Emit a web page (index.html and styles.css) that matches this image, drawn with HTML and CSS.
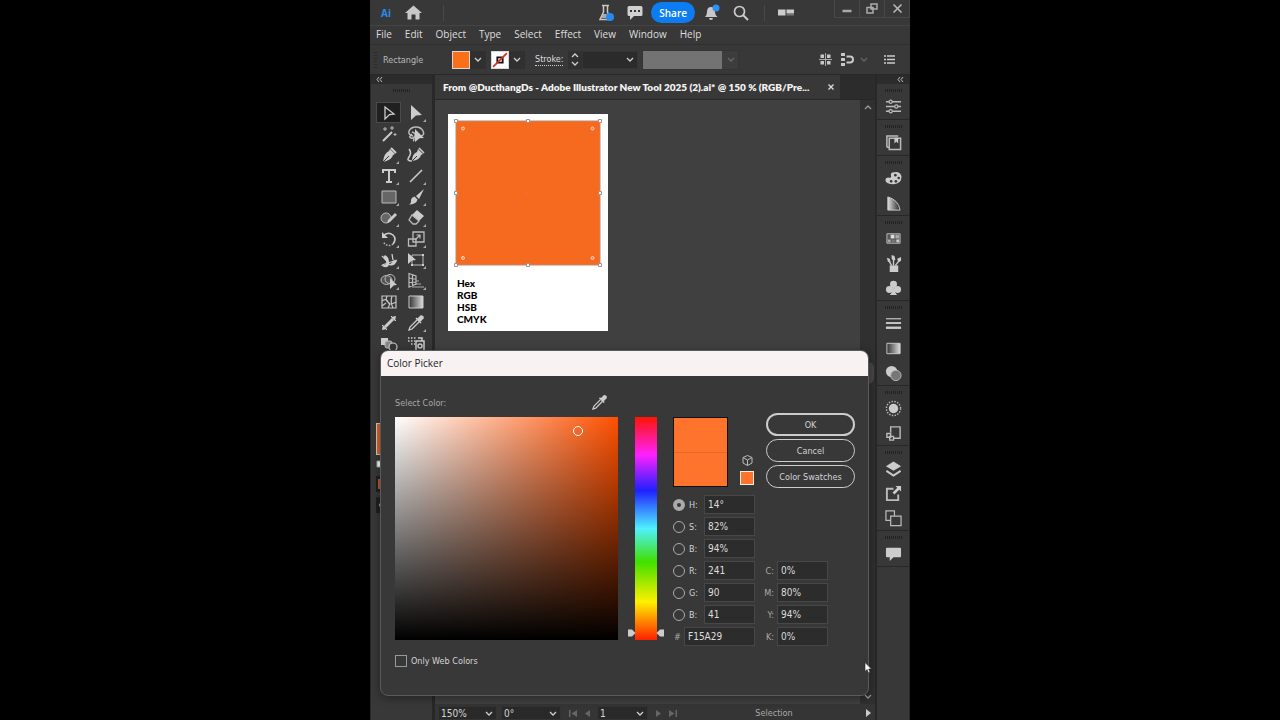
FILE: index.html
```html
<!DOCTYPE html>
<html lang="en">
<head>
<meta charset="utf-8">
<title>Color Picker</title>
<link rel="stylesheet" href="styles.css">
</head>
<body>
<main class="app">
  <header class="titlebar">
    <span class="logo">Ai</span>
    <button class="icon-btn home" aria-label="Home"><svg width="17" height="15" viewBox="0 0 17 15"><path fill="#c8c8c8" d="M8.500.5 0 8h2.500v6.500h4V9.500h4v5h4V8H17z"/></svg></button>
    <span class="divider"></span>
    <div class="title-tools">
      <button class="icon-btn" aria-label="Beta features"><svg width="17" height="18" viewBox="0 0 17 18"><path d="M4 1.500h7M5.500 2v6L2 15.500h10L9.500 8V2" fill="none" stroke="#c8c8c8" stroke-width="1.500"/><path d="M5 10h4l2 4H3z" fill="#aaa"/><circle cx="12" cy="13" r="4" fill="#2389f5"/></svg></button>
      <button class="icon-btn" aria-label="Comments"><svg width="16" height="16" viewBox="0 0 16 16"><path fill="#d0d0d0" d="M2 1h12q1.500 0 1.500 1.500v7Q15.500 11 14 11H7l-4 4v-4H2Q.5 11 .5 9.500v-7Q.5 1 2 1"/><path d="M3 5h2v2H3zm4 0h2v2H7zm4 0h2v2h-2z" fill="#333"/></svg></button>
      <button class="share">Share</button>
      <button class="icon-btn bell" aria-label="Notifications"><svg width="16" height="17" viewBox="0 0 16 17"><path fill="#c8c8c8" d="M6 3q4 0 4 5 0 3 2.500 5H0q2-2 2-5 0-5 4-5m-2 11h4q0 2-2 2t-2-2"/><circle cx="11" cy="4" r="3.500" fill="#2d91f5"/></svg></button>
      <button class="icon-btn" aria-label="Search"><svg width="16" height="16" viewBox="0 0 16 16"><circle cx="6.500" cy="6.500" r="5" fill="none" stroke="#ccc" stroke-width="1.700"/><path d="m10 10 5 5" stroke="#ccc" stroke-width="2"/></svg></button>
    </div>
    <span class="divider"></span>
    <button class="icon-btn tiles" aria-label="Arrange documents"><svg width="16" height="7" viewBox="0 0 16 7"><path fill="#ccc" d="M0 .5h7.500v6H0zm8.500 0H16v4H8.500z"/><path fill="#777" d="M8.500 5H16v1.500H8.500z"/></svg></button>
    <div class="window-buttons">
      <button aria-label="Minimize"><svg width="10" height="11" viewBox="0 0 10 11"><path d="M.5 8h9" stroke="#aaa" stroke-width="2.500"/></svg></button>
      <button aria-label="Restore"><svg width="12" height="11" viewBox="0 0 12 11"><path fill="none" stroke="#aaa" stroke-width="1.500" d="M5 1h6v5H5zM1 4.500h6V10H1z"/></svg></button>
      <button aria-label="Close"><svg width="9" height="9" viewBox="0 0 9 9"><path d="m.5.5 8 8m0-8-8 8" stroke="#bbb" stroke-width="1.500"/></svg></button>
    </div>
  </header>

  <nav class="menubar">
    <button>File</button><button>Edit</button><button>Object</button><button>Type</button><button>Select</button><button>Effect</button><button>View</button><button>Window</button><button>Help</button>
  </nav>

  <section class="controlbar">
    <span class="vgrip"></span>
    <span class="kind">Rectangle</span>
    <div class="paint">
      <button class="swatch fill" aria-label="Fill"></button>
      <button class="drop" aria-label="Fill options"><svg class="chev" viewBox="0 0 8 5"><path d="m1 1 3 3 3-3"/></svg></button>
    </div>
    <div class="paint">
      <button class="swatch" aria-label="Stroke color"><svg width="16" height="16" viewBox="0 0 15 15"><path d="M5 5h5v5H5z" fill="none" stroke="#111" stroke-width="1.700"/><path d="M1 14 14 1" stroke="#d8301c" stroke-width="1.700"/></svg></button>
      <button class="drop" aria-label="Stroke options"><svg class="chev" viewBox="0 0 8 5"><path d="m1 1 3 3 3-3"/></svg></button>
    </div>
    <label class="stroke-label" for="stroke">Stroke:</label>
    <button class="spinner" aria-label="Step weight"><svg class="chev" viewBox="0 0 8 5"><path d="m1 4 3-3 3 3"/></svg><svg class="chev" viewBox="0 0 8 5"><path d="m1 1 3 3 3-3"/></svg></button>
    <span class="combo weight"><select id="stroke"><option></option></select><svg class="chev" viewBox="0 0 8 5"><path d="m1 1 3 3 3-3"/></svg></span>
    <span class="combo profile"><select aria-label="Width profile" disabled><option></option></select><svg class="chev" viewBox="0 0 8 5"><path d="m1 1 3 3 3-3"/></svg></span>
    <div class="control-end">
      <button class="icon-btn" aria-label="Align"><svg width="13" height="13" viewBox="0 0 13 13"><path fill="#c8c8c8" d="M1.500 1.500H5V5H1.500zm6.500 0h3.500V5H8zM1.500 8H5v3.500H1.500zM8 8h3.500v3.500H8z"/><path d="M6.500 0v13M0 6.500h13" stroke="#aaa"/></svg></button>
      <button class="icon-btn" aria-label="Snap"><svg width="13" height="13" viewBox="0 0 13 13"><path fill="#c8c8c8" d="M0 0h4v3H0zm0 5h4v3H0zm0 5h4v3H0z"/><path d="M5.500 3.500H9q3 0 3 3t-3 3H5.500" fill="none" stroke="#c8c8c8" stroke-width="2"/></svg></button>
      <svg class="chev dim" viewBox="0 0 8 5"><path d="m1 1 3 3 3-3"/></svg>
      <button class="icon-btn list" aria-label="Panel menu"><svg width="11" height="9" viewBox="0 0 11 9"><path d="M0 1h2M3 1h8M0 4.500h2m1 0h8M0 8h2m1 0h8" stroke="#ccc" stroke-width="1.400"/></svg></button>
    </div>
  </section>

  <div class="workspace">
    <aside class="tools">
      <div class="collapse"><svg width="7" height="5" viewBox="0 0 7 5"><path d="M3 0 1 2.500 3 5m3-5L4 2.500 6 5"/></svg></div>
      <div class="grip"></div>
      <div class="tool-grid">
        <button class="active" aria-label="Selection"><svg viewBox="0 0 18 18"><path d="m5 3 9 7-4.500.5L5 15z" fill="none" stroke="#ccc" stroke-width="1.300"/></svg></button>
        <button class="more" aria-label="Direct selection"><svg viewBox="0 0 18 18"><path d="m4 1 11 10-6 .5L4 16z" fill="#ccc"/></svg></button>
        <button aria-label="Magic wand"><svg viewBox="0 0 18 18"><path d="m3 16 9-9" stroke="#ccc" stroke-width="2"/><path d="M5 2v4M3 4h4m5-3v4m-2-2h4m1 5v3m-1.500-1.500h3" stroke="#bbb"/></svg></button>
        <button aria-label="Lasso"><svg viewBox="0 0 18 18"><path d="M6 11Q1 10 2 6q2-4 7-4t7 4-2 5M5 7q4 1 3 4t-4 2 1-4M6 12q2 3 0 4" fill="none" stroke="#bbb" stroke-width="1.500"/><path d="m8 4 9 9-4.500.3L8 17z" fill="#ccc"/></svg></button>
        <button class="more" aria-label="Pen"><svg viewBox="0 0 18 18"><path d="M10 3 15 8l-2 1q-1 5-10 7Q4 7 9 5z" fill="#ccc"/><path d="m3 16 6-6" stroke="#383838"/><path d="m11 2 5 5" stroke="#ccc" stroke-width="2"/></svg></button>
        <button aria-label="Curvature"><svg viewBox="0 0 18 18"><path d="m11 3 5 5-2 1q-1 5-9 6 0-7 5-9z" fill="#ccc"/><path d="m5 15 5-5" stroke="#383838"/><path d="M2 3q3 4 0 8t3 4M12 2l5 5" fill="none" stroke="#ccc" stroke-width="1.500"/></svg></button>
        <button class="more" aria-label="Type"><svg viewBox="0 0 18 18"><path d="M3 6V3h12v3M9 3v12M6 15h6" fill="none" stroke="#ccc" stroke-width="2"/></svg></button>
        <button class="more" aria-label="Line"><svg viewBox="0 0 18 18"><path d="M3 15 15 3" stroke="#ccc" stroke-width="1.600"/></svg></button>
        <button class="more" aria-label="Rectangle"><svg viewBox="0 0 18 18"><path d="M2 3h14v12H2z" fill="#666" stroke="#bbb"/></svg></button>
        <button class="more" aria-label="Paintbrush"><svg viewBox="0 0 18 18"><path d="m17 1-5 10-3-3zM7.500 8.500l3 3q-1 5-9 5 3-1 2.500-4 0-3 3.500-4" fill="#ccc"/></svg></button>
        <button class="more" aria-label="Shaper"><svg viewBox="0 0 18 18"><circle cx="6" cy="9" r="5" fill="#666" stroke="#bbb"/><path d="m7 14 1-3 7-7 2 2-7 7z" fill="#ccc"/></svg></button>
        <button class="more" aria-label="Eraser"><svg viewBox="0 0 18 18"><path d="m10 1 7 6-5 5-7-6z" fill="#ccc"/><path d="m5 6 7 6-3 3H6l-4-4z" fill="none" stroke="#bbb" stroke-width="1.300"/></svg></button>
        <button class="more" aria-label="Rotate"><svg viewBox="0 0 18 18"><path d="M3 6q5-5 10-1 4 4 0 9" fill="none" stroke="#ccc" stroke-width="1.600"/><path d="M13 14q-5 4-10-2" fill="none" stroke="#bbb" stroke-width="1.500" stroke-dasharray="1.500 1.500"/><path d="M2 2v6h6z" fill="#ccc"/></svg></button>
        <button class="more" aria-label="Scale"><svg viewBox="0 0 18 18"><path d="M6 2h11v10H6zM1.500 9H9v7H1.500z" fill="none" stroke="#bbb" stroke-width="1.300"/><path d="m8 10 5-5M9.500 5H13v3.500" fill="none" stroke="#bbb" stroke-width="1.200"/></svg></button>
        <button class="more" aria-label="Width"><svg viewBox="0 0 18 18"><path d="M1 14q6 1 5-4-4-4-1-6 4 2 4 7t5-2l3 1q-3 6-8 4-2 4-7 1" fill="#ccc"/><path d="m2 5 5 5m5-7 1 6M2 14 17 9" stroke="#ccc" stroke-width="1.300"/></svg></button>
        <button class="more" aria-label="Free transform"><svg viewBox="0 0 18 18"><path d="M5 4h11v10H5z" fill="none" stroke="#bbb"/><path d="M15 3h2v2h-2zm0 10h2v2h-2zM4 13h2v2H4z" fill="#ccc"/><path d="m1 2 8 7-4 .5L1 13z" fill="#ccc"/></svg></button>
        <button class="more" aria-label="Shape builder"><svg viewBox="0 0 18 18"><ellipse cx="6.500" cy="8" rx="5.500" ry="4.500" fill="#555" stroke="#bbb"/><ellipse cx="10" cy="7" rx="5" ry="4.500" fill="none" stroke="#bbb"/><path d="m10 6 7 7-3 .3L10 17z" fill="#ccc"/></svg></button>
        <button class="more" aria-label="Perspective grid"><svg viewBox="0 0 18 18"><path d="M2 1.500v13.500L9 12V4zM2 6l7 1M2 10.500 9 10M5.500 3v11" fill="none" stroke="#bbb" stroke-width="1.200"/><path d="M9 9h3M9 12h5M5 15h12" stroke="#aaa"/></svg></button>
        <button aria-label="Mesh"><svg viewBox="0 0 18 18"><path d="M2 3h14v12H2zM2 8q5-3 6 1t8 0M7 3q-2 5 1 6t0 6m4-12q-2 6 1 12M2 13l4-3" fill="none" stroke="#c5c5c5" stroke-width="1.200"/></svg></button>
        <button aria-label="Gradient"><svg viewBox="0 0 18 18"><defs><linearGradient id="g"><stop stop-color="#333"/><stop offset="1" stop-color="#ddd"/></linearGradient></defs><path d="M2 3h14v12H2z" fill="url(#g)" stroke="#ccc"/></svg></button>
        <button aria-label="Measure"><svg viewBox="0 0 18 18"><path d="M5 13 13 5" stroke="#ccc" stroke-width="3"/><path d="m11 2 5 5M2 11l5 5" stroke="#ccc"/><path d="m16 2-5 1 4 4zM2 16l1-5 4 4z" fill="#ccc"/></svg></button>
        <button class="more" aria-label="Eyedropper"><svg viewBox="0 0 18 18"><path d="m11 5 3-3q2 0 2 2l-3 3zM9 4l5 5" fill="#ccc" stroke="#ccc" stroke-width="1.700"/><path d="m10 6-7 7-1 3 3-1 7-7" fill="none" stroke="#ccc" stroke-width="1.300"/></svg></button>
        <button aria-label="Blend"><svg viewBox="0 0 18 18"><path d="M1 3h7v7H1z" fill="#ccc"/><rect x="5" y="6" width="7" height="7" rx="2" fill="#888" stroke="#bbb"/><circle cx="13" cy="12" r="4" fill="#383838" stroke="#ccc" stroke-width="1.200"/></svg></button>
        <button aria-label="Symbol sprayer"><svg viewBox="0 0 18 18"><path d="M9 6h8v10H9zM11 3h4v3" fill="none" stroke="#ccc" stroke-width="1.500"/><circle cx="13" cy="11" r="2" fill="none" stroke="#ccc" stroke-width="1.500"/><path d="M1 3h8M1 6h7M4 9h4" stroke="#ccc" stroke-width="1.500" stroke-dasharray="1.500 1.500"/></svg></button>
      </div>
      <div class="tool-colors">
        <button class="current-fill" aria-label="Current fill"></button>
        <button class="defaults" aria-label="Default colors"><svg width="10" height="11" viewBox="0 0 10 11"><path d="M1 1h6v6H1z" fill="#fff" stroke="#aaa"/><path d="M8 4v5H4" fill="none" stroke="#fff" stroke-width="1.500"/></svg></button>
        <button class="mode" aria-label="Color mode"><span class="mode-chip"></span></button>
        <button class="mode" aria-label="Draw mode"><span class="mode-dot"></span></button>
      </div>
    </aside>

    <section class="document">
      <div class="tabs"><div class="tab"><span class="tab-name">From @DucthangDs - Adobe Illustrator New Tool 2025 (2).ai* @ 150 % (RGB/Pre...</span><button class="icon-btn" aria-label="Close tab"><svg width="6" height="6" viewBox="0 0 6 6"><path d="m.5.5 5 5m0-5-5 5" stroke="#ddd" stroke-width="1.300"/></svg></button></div></div>
      <div class="stage">
        <div class="canvas">
          <article class="artboard">
            <svg class="square" viewBox="0 0 146 146">
              <path fill="#f66a1f" stroke="#b88b78" d="M1 1h144v144H1z"/>
              <g fill="#fff" stroke="#a98f85"><path d="M-.5-.5h3v3h-3zm72 0h3v3h-3zm72 0h3v3h-3zm-144 72h3v3h-3zm144 0h3v3h-3zm-144 72h3v3h-3zm72 0h3v3h-3zm72 0h3v3h-3z"/></g>
              <g fill="#f4874c" stroke="#ffd5bd"><circle cx="8" cy="8.500" r="1.500"/><circle cx="137.500" cy="8.500" r="1.500"/><circle cx="8" cy="138" r="1.500"/><circle cx="137.500" cy="138" r="1.500"/></g>
              <path d="m71 72 3 2m0-2-3 2" stroke="#ff654d"/>
            </svg>
            <p class="modes">Hex<br>RGB<br>HSB<br>CMYK</p>
          </article>
        </div>
        <div class="scrollbar"><svg class="chev" viewBox="0 0 8 5"><path d="m1 4 3-3 3 3"/></svg><span class="thumb"></span><svg class="chev" viewBox="0 0 8 5"><path d="m1 1 3 3 3-3"/></svg></div>
      </div>
      <footer class="status">
        <span class="combo zoom"><select aria-label="Zoom"><option>150%</option></select><svg class="chev" viewBox="0 0 8 5"><path d="m1 1 3 3 3-3"/></svg></span>
        <span class="combo angle"><select aria-label="Rotate view"><option>0°</option></select><svg class="chev" viewBox="0 0 8 5"><path d="m1 1 3 3 3-3"/></svg></span>
        <div class="pager">
          <button class="icon-btn" aria-label="First"><svg width="8" height="7" viewBox="0 0 8 7"><path fill="#666" d="M0 0h1.500v7H0zm8 0v7L2.500 3.500z"/></svg></button>
          <button class="icon-btn" aria-label="Previous"><svg width="5" height="7" viewBox="0 0 5 7"><path fill="#666" d="M5 0v7L0 3.500z"/></svg></button>
        </div>
        <span class="combo board"><select aria-label="Artboard"><option>1</option></select><svg class="chev" viewBox="0 0 8 5"><path d="m1 1 3 3 3-3"/></svg></span>
        <div class="pager">
          <button class="icon-btn" aria-label="Next"><svg width="5" height="7" viewBox="0 0 5 7"><path fill="#666" d="M0 0v7l5-3.500z"/></svg></button>
          <button class="icon-btn" aria-label="Last"><svg width="8" height="7" viewBox="0 0 8 7"><path fill="#666" d="M6.500 0H8v7H6.500zM0 0v7l5.500-3.500z"/></svg></button>
        </div>
        <span class="mode-name">Selection</span>
        <button class="icon-btn play" aria-label="Status options"><svg width="5" height="8" viewBox="0 0 5 8"><path fill="#ccc" d="M0 0v8l5-4z"/></svg></button>
      </footer>
    </section>

    <aside class="panels">
      <div class="collapse end"><svg width="7" height="5" viewBox="0 0 7 5"><path d="M3 0 1 2.500 3 5m3-5L4 2.500 6 5"/></svg></div>
      <div class="group"><button aria-label="Properties"><svg viewBox="0 0 18 18"><path d="M1 4h16M1 9h16M1 14h16" stroke="#bbb" stroke-width="1.400"/><g fill="#383838" stroke="#bbb" stroke-width="1.300"><circle cx="6" cy="4" r="1.700"/><circle cx="12" cy="9" r="1.700"/><circle cx="6" cy="14" r="1.700"/></g></svg></button></div>
      <div class="group"><button aria-label="Libraries"><svg viewBox="0 0 18 18"><path d="M2 14V2h12M4.500 4.500h12v12h-12zM2 14h2" fill="none" stroke="#bbb" stroke-width="1.600"/><path d="M10 4h4v6l-2-2-2 2z" fill="#ccc"/></svg></button></div>
      <div class="group"><button aria-label="Color"><svg viewBox="0 0 18 18"><path d="M7 3q9-3 10.500 4 0 8-8.500 8-7.500 0-8.500-4 0-3 3-3 3 1 3-1-1-3 .5-4" fill="#ccc"/><g fill="#383838"><circle cx="11" cy="5.500" r="1.400"/><circle cx="14.500" cy="8.500" r="1.400"/><circle cx="11.500" cy="12" r="1.400"/><circle cx="6.500" cy="12" r="1.400"/></g></svg></button><button aria-label="Color guide"><svg viewBox="0 0 18 18"><path d="M3 16V2q11 3 13 14z" fill="url(#g2)" stroke="#ccc"/><defs><linearGradient id="g2" x1="1" x2="0"><stop stop-color="#222"/><stop offset="1" stop-color="#ddd"/></linearGradient></defs></svg></button></div>
      <div class="group"><button aria-label="Swatches"><svg viewBox="0 0 18 18"><path d="M2 4h14v10H2z" fill="#555" stroke="#bbb"/><path d="M6 5h4v4H6z" fill="#ddd"/><path d="M11 5h4v4h-4zM3 10h3v3H3z" fill="#aaa"/><path d="M7 10h4v3H7z" fill="#777"/><path d="M12 10h3v3h-3z" fill="#ccc"/></svg></button><button aria-label="Brushes"><svg viewBox="0 0 18 18"><path d="M5 11h9v7H5z" fill="#ccc"/><path d="m7 11-3-5m5 5V3m2 8 4-5" stroke="#ccc" stroke-width="1.400"/><path d="m2 3 3 1 1 4-3-1zm5-3 3 1 1 4-2 1-2-2zm6 4 4-2v4l-3 2z" fill="#ccc"/></svg></button><button aria-label="Symbols"><svg viewBox="0 0 18 18"><g fill="#ccc"><circle cx="9" cy="4.500" r="3.700"/><circle cx="4.700" cy="10" r="3.700"/><circle cx="13.300" cy="10" r="3.700"/><path d="M8 7h2q0 7 3 9H5q3-2 3-9"/></g></svg></button></div>
      <div class="group"><button aria-label="Stroke"><svg viewBox="0 0 18 18"><path d="M1 4h16" stroke="#ccc" stroke-width="1.200"/><path d="M1 8.500h16" stroke="#ccc" stroke-width="2"/><path d="M1 13.500h16" stroke="#ccc" stroke-width="2.500"/></svg></button><button aria-label="Gradient panel"><svg viewBox="0 0 18 18"><path d="M2 3.500h14v11H2z" fill="url(#g)" stroke="#ccc"/></svg></button><button aria-label="Transparency"><svg viewBox="0 0 18 18"><circle cx="7" cy="7" r="6" fill="#ccc"/><circle cx="11.500" cy="11" r="5.500" fill="#777" stroke="#bbb"/></svg></button></div>
      <div class="group"><button aria-label="Appearance"><svg viewBox="0 0 18 18"><circle cx="9" cy="9" r="5" fill="#ccc"/><circle cx="9" cy="9" r="7.500" fill="none" stroke="#bbb" stroke-width="1.500" stroke-dasharray="1.500 1.500"/></svg></button><button aria-label="Graphic styles"><svg viewBox="0 0 18 18"><path d="M6 8V2h10v12H9M2 9h4v4H2zm3 3h4v4H5z" fill="none" stroke="#bbb" stroke-width="1.500"/></svg></button></div>
      <div class="group"><button aria-label="Layers"><svg viewBox="0 0 18 18"><path d="m9 1.500 8 5-8 5-8-5z" fill="#ccc"/><path d="m1.500 11.500 7.500 5 7.500-5" fill="none" stroke="#ccc" stroke-width="2"/></svg></button><button aria-label="Asset export"><svg viewBox="0 0 18 18"><path d="M9 4H2v12h12v-6" fill="none" stroke="#bbb" stroke-width="2"/><path d="M11 1h6v6l-2-2-5 5-2-2 5-5z" fill="#ccc"/></svg></button><button aria-label="Artboards"><svg viewBox="0 0 18 18"><path d="M6 11H1V1h9v5M6 6.500h11v10H6z" fill="none" stroke="#bbb" stroke-width="1.300"/></svg></button></div>
      <div class="group"><button aria-label="Panel comments"><svg viewBox="0 0 18 18"><path d="M2 3h14q1 0 1 1v8q0 1-1 1H9l-4 4v-4H2q-1 0-1-1V4q0-1 1-1" fill="#ccc"/></svg></button></div>
    </aside>
  </div>

  <form class="dialog" aria-labelledby="dialog-title">
    <h1 class="dialog-title" id="dialog-title">Color Picker</h1>
    <div class="dialog-body">
      <div class="pick-head"><span>Select Color:</span><button type="button" class="icon-btn" aria-label="Pick from screen"><svg width="17" height="17" viewBox="0 0 18 18"><path d="m11 5 3-3q2 0 2 2l-3 3zM9 4l5 5" fill="#ccc" stroke="#ccc" stroke-width="1.700"/><path d="m10 6-7 7-1 3 3-1 7-7" fill="none" stroke="#ccc" stroke-width="1.300"/></svg></button></div>
      <div class="pick-row">
        <div class="field"><span class="marker"></span></div>
        <div class="hue"><svg class="hue-arrows" viewBox="0 0 36 8"><path fill="#ccc" d="M0 .5h4L7.500 4 4 7.500H0zm36 0h-4L28.500 4 32 7.500h4z"/></svg></div>
        <div class="values">
          <div class="preview">
            <div class="compare"><span class="chip-new"></span><span class="chip-old"></span></div>
            <div class="websafe">
              <button type="button" class="icon-btn" aria-label="Web safe"><svg width="11" height="11" viewBox="0 0 11 11"><path d="m5.500.5 4.500 2v5.500l-4.500 2.500L1 8V2.500zM1 2.500 5.500 5 10 2.500M5.500 5v5.500" fill="none" stroke="#bbb"/></svg></button>
              <button type="button" class="safe-chip" aria-label="Nearest web color"></button>
            </div>
          </div>
          <div class="numbers">
            <div class="rows">
              <div class="row"><input type="radio" name="axis" id="rh" checked><label for="rh">H:</label><input class="num" type="text" value="14°" aria-label="Hue"></div>
              <div class="row"><input type="radio" name="axis" id="rs"><label for="rs">S:</label><input class="num" type="text" value="82%" aria-label="Saturation"></div>
              <div class="row"><input type="radio" name="axis" id="rb"><label for="rb">B:</label><input class="num" type="text" value="94%" aria-label="Brightness"></div>
              <div class="row"><input type="radio" name="axis" id="rr"><label for="rr">R:</label><input class="num" type="text" value="241" aria-label="Red"></div>
              <div class="row"><input type="radio" name="axis" id="rg"><label for="rg">G:</label><input class="num" type="text" value="90" aria-label="Green"></div>
              <div class="row"><input type="radio" name="axis" id="rbl"><label for="rbl">B:</label><input class="num" type="text" value="41" aria-label="Blue"></div>
              <div class="row hex"><label for="hex">#</label><input class="num" type="text" id="hex" value="F15A29"></div>
            </div>
            <div class="rows cmyk">
              <div class="row"><label for="c">C:</label><input class="num" type="text" id="c" value="0%"></div>
              <div class="row"><label for="m">M:</label><input class="num" type="text" id="m" value="80%"></div>
              <div class="row"><label for="y">Y:</label><input class="num" type="text" id="y" value="94%"></div>
              <div class="row"><label for="k">K:</label><input class="num" type="text" id="k" value="0%"></div>
            </div>
          </div>
        </div>
        <div class="actions">
          <button type="button" class="pill primary">OK</button>
          <button type="button" class="pill">Cancel</button>
          <button type="button" class="pill">Color Swatches</button>
        </div>
      </div>
      <label class="web-only"><input type="checkbox">Only Web Colors</label>
    </div>
    <svg class="pointer" viewBox="0 0 8 12"><path d="M1 .5v9l2-2 1.500 3.500 1.500-.8L4.700 7H7.500z" fill="#fff" stroke="#222" stroke-width=".6"/></svg>
  </form>
</main>
</body>
</html>
```
FILE: styles.css
```css
* { box-sizing: border-box; }

body {
  margin: 0;
  background: #000;
  color: #d6d6d6;
  font: 10px/14px "Open Sans", "Noto Sans", sans-serif;
}

button, select, input { font: inherit; color: inherit; margin: 0; }

button { background: none; border: 0; padding: 0; }

svg { display: block; }

.app {
  position: relative;
  display: flex;
  flex-direction: column;
  height: 100vh;
  aspect-ratio: 3 / 4;
  margin: 0 auto;
  overflow: hidden;
  background: #383838;
}

.icon-btn { display: flex; align-items: center; justify-content: center; }

.chev {
  width: 8px;
  height: 5px;
  flex: none;
  fill: none;
  stroke: #d0d0d0;
  stroke-width: 1.3;
}
.chev.dim { stroke: #666; }

/* Title bar */
.titlebar {
  display: flex;
  align-items: center;
  flex: none;
  height: 26px;
  padding-left: 11px;
  border-bottom: 1px solid #444;
}
.logo { width: 24px; color: #2b8cf0; font-weight: 700; }
.home { margin-right: 21px; }
.divider { width: 1px; height: 16px; background: #494949; }
.title-tools { display: flex; align-items: center; gap: 12px; margin-left: auto; margin-right: 15px; }
.share {
  height: 21px;
  padding: 0 8px;
  border-radius: 11px;
  background: #0c7cf2;
  color: #fff;
  font-weight: 600;
}
.title-tools .share { margin: 0 -2px 0 -4px; }
.tiles { margin: 0 40px 0 13px; }
.window-buttons { display: flex; align-self: flex-start; border: solid #484848; border-width: 0 0 1px 1px; }
.window-buttons button {
  display: flex;
  align-items: center;
  justify-content: center;
  width: 25px;
  height: 17px;
  border-right: 1px solid #484848;
}

/* Menus */
.menubar {
  display: flex;
  flex: none;
  gap: 13px;
  height: 19px;
  padding-left: 6px;
  border-bottom: 1px solid #2f2f2f;
  color: #dedede;
}
.menubar button { height: 16px; }

/* Control bar */
.controlbar {
  display: flex;
  align-items: center;
  flex: none;
  height: 30px;
  padding-left: 4px;
  border-bottom: 1px solid #282828;
  color: #b8b8b8;
  font: 9px/14px "DejaVu Sans Condensed", "DejaVu Sans", sans-serif;
}
.vgrip { width: 3px; height: 16px; margin-right: 6px; background: repeating-linear-gradient(#2a2a2a 0 1px, transparent 1px 3px); }
.kind { width: 69px; }
.paint { display: flex; margin-right: 5px; }
.swatch { width: 18px; height: 18px; border: 1px solid #d8d8d8; background: #fff; }
.swatch.fill { background: #f87018; }
.drop { display: flex; align-items: center; justify-content: center; width: 16px; background: #303030; }
.stroke-label { margin: 0 5px; color: #ddd; border-bottom: 1px dotted #ccc; line-height: 12px; }
.spinner {
  display: flex;
  flex-direction: column;
  align-items: center;
  justify-content: center;
  gap: 3px;
  width: 14px;
  height: 18px;
  background: #303030;
}
.combo { position: relative; display: flex; align-items: center; height: 18px; background: #2b2b2b; border: 1px solid #343434; }
.combo select { appearance: none; width: 100%; height: 100%; padding: 0 0 0 2px; border: 0; background: none; opacity: 1; }
.combo .chev { position: absolute; right: 3px; pointer-events: none; }
.combo.weight { width: 56px; margin-right: 4px; }
.combo.profile { width: 97px; height: 20px; background: linear-gradient(to right, #737373 79px, #3d3d3d 79px); }
.combo.profile .chev { stroke: #666; }
.control-end { display: flex; align-items: center; gap: 9px; margin-left: auto; padding-right: 15px; }
.control-end .chev { margin-left: -3px; }
.list { margin-left: 7px; }

/* Workspace */
.workspace { display: flex; flex: 1; min-height: 0; }
.collapse { display: flex; align-items: center; height: 9px; padding-left: 5px; background: #2c2c2c; }
.collapse.end { justify-content: flex-end; padding-right: 5px; }
.collapse svg { fill: none; stroke: #bbb; }

.tools { display: flex; flex-direction: column; width: 65px; flex: none; border: solid #282828; border-width: 0 3px 0 1px; }
.grip { width: 17px; height: 3px; margin: 5px auto 10px; background: repeating-linear-gradient(to right, #222 0 1px, transparent 1px 2px); }
.tool-grid { display: grid; grid-template-columns: 27px 27px; grid-auto-rows: 21px; padding-left: 4px; }
.tool-grid button { position: relative; display: flex; align-items: center; justify-content: center; }
.tool-grid svg { width: 18px; height: 18px; }
.tool-grid .active { background: #202020; border: 1px solid #4a4a4a; margin-right: 1px; margin-left: 1px; }
.more::after {
  content: "";
  position: absolute;
  right: 3px;
  bottom: 1px;
  border-left: 3px solid transparent;
  border-bottom: 3px solid #aaa;
}
.tool-colors { display: flex; flex-direction: column; gap: 5px; align-items: flex-start; padding: 69px 0 0 5px; }
.current-fill { width: 32px; height: 32px; background: #dc6528; border: 1px solid #ccc; }
.mode { display: flex; align-items: center; width: 17px; height: 16px; padding-left: 2px; background: #202020; }
.mode-chip { width: 12px; height: 10px; background: #b75b38; }
.mode-dot { width: 4px; height: 4px; margin-left: 1px; border-radius: 50%; background: #aaa; }

.document { display: flex; flex: 1; flex-direction: column; min-width: 0; }
.tabs { display: flex; height: 25px; flex: none; background: #2c2c2c; border-bottom: 1px solid #282828; }
.tab { display: flex; align-items: center; justify-content: space-between; width: 405px; padding: 0 6px 0 8px; background: #383838; color: #f4f4f4; }
.tab-name { font-family: Lato, "Open Sans", sans-serif; font-weight: 800; white-space: nowrap; }
.stage { display: flex; flex: 1; min-height: 0; background: #404040; }
.canvas { flex: 1; padding: 14px 0 0 13px; }
.artboard { width: 160px; padding: 6px 7px; background: #fff; }
.square { width: 146px; height: 146px; overflow: visible; }
.modes { margin: 11px 0 0 2px; color: #000; font: 900 10px/12px Lato, sans-serif; }
.scrollbar { display: flex; flex-direction: column; align-items: center; justify-content: space-between; width: 15px; padding: 5px 0; background: #303030; }
.scrollbar .chev { stroke: #999; }
.thumb { width: 13px; height: 22px; margin-bottom: 58px; border-radius: 6px; background: #484848; }

.status { display: flex; align-items: center; flex: none; height: 16px; padding: 2px 4px 0 3px; background: #353535; font: 9px/14px "DejaVu Sans Condensed", "DejaVu Sans", sans-serif; }
.status .combo { height: 14px; background: #292929; border-color: #333; font-size: 10px; }
.status .zoom { width: 59px; margin-right: 4px; }
.status .angle { width: 60px; }
.status .board { width: 51px; }
.pager { display: flex; justify-content: center; gap: 8px; width: 36px; }
.mode-name { flex: 1; padding-left: 22px; text-align: center; color: #aaa; }
.play { margin-left: 24px; }

.panels { width: 35px; flex: none; border: solid #282828; border-width: 0 1px 0 2px; }
.group { position: relative; min-height: 36px; padding-top: 10px; border-bottom: 1px solid #282828; }
.group::before {
  content: "";
  position: absolute;
  top: 5px;
  left: 8px;
  width: 17px;
  height: 3px;
  background: repeating-linear-gradient(to right, #222 0 1px, transparent 1px 2px);
}
.group button { display: flex; align-items: center; justify-content: center; width: 100%; height: 25px; }
.group button:last-child { height: 24px; }
.group svg { width: 17px; height: 17px; }

/* Color picker dialog */
.dialog {
  position: absolute;
  left: 10px;
  right: 41px;
  bottom: 24px;
  height: 346px;
  border: 1px solid #5a5a5a;
  border-radius: 8px;
  background: #383838;
  box-shadow: 0 2px 10px #0006;
  color: #d4d4d4;
  font: 9px/14px "DejaVu Sans Condensed", "DejaVu Sans", sans-serif;
}
.dialog-title {
  margin: 0;
  padding: 0 6px 1px;
  border-radius: 7px 7px 0 0;
  background: #f8f2f2;
  color: #222;
  font: 10px/24px "Open Sans", sans-serif;
}
.dialog-body { padding: 12px 14px 0; }
.pick-head { display: flex; align-items: center; justify-content: space-between; width: 223px; height: 29px; padding-right: 10px; color: #a8a8a8; }
.pick-row { display: flex; align-items: flex-start; }
.field {
  position: relative;
  flex: none;
  width: 223px;
  height: 223px;
  background: linear-gradient(to top, #000, transparent), linear-gradient(to right, #fff, #ff5000);
}
.marker { position: absolute; left: 178px; top: 9px; width: 10px; height: 10px; border: 1px solid #fff; border-radius: 50%; }
.hue {
  position: relative;
  flex: none;
  width: 22px;
  height: 223px;
  margin: 0 16px 0 17px;
  background: linear-gradient(#ff1400, #ff20ff 17%, #2020ff 33%, #50f0ff 50%, #40e000 65%, #fff000 83%, #ff2000);
}
.hue-arrows { position: absolute; left: -7px; bottom: 3px; width: 36px; height: 8px; }
.values { flex: none; width: 155px; }
.preview { display: flex; gap: 12px; height: 70px; margin-bottom: 8px; }
.compare { display: flex; flex-direction: column; width: 55px; border: 1px solid #111; }
.chip-new, .chip-old { flex: 1; background: #ff742c; }
.chip-new { border-bottom: 1px solid #e36a2d; }
.websafe { display: flex; flex-direction: column; align-items: center; justify-content: flex-end; gap: 5px; padding-bottom: 2px; }
.safe-chip { width: 14px; height: 14px; border: 1px solid #eed; background: #ff742c; }
.numbers { display: flex; align-items: flex-end; justify-content: space-between; }
.rows { display: flex; flex-direction: column; gap: 3px; width: 82px; }
.row { display: flex; align-items: center; justify-content: space-between; height: 19px; }
.row label { flex: 1; padding-left: 4px; }
.num { width: 51px; height: 19px; padding: 0 0 0 3px; border: 1px solid #474747; background: #2c2c2c; color: #ddd; outline: 0; font-size: 10px; }
.hex label { padding-left: 1px; color: #aaa; }
.hex .num { width: 71px; }
.cmyk { width: 64px; }
.cmyk label { padding: 0 3px 0 0; text-align: right; color: #aaa; }
input[type="radio"] { appearance: none; width: 12px; height: 12px; margin: 0; border: 1px solid #aaa; border-radius: 50%; }
input[type="radio"]:checked { border: 4px solid #aaa; background: #383838; }
.actions { display: flex; flex: none; flex-direction: column; gap: 3px; width: 89px; margin: -4px 0 0 -62px; }
.pill { height: 23px; border: 1px solid #ccc; border-radius: 12px; }
.pill.primary { border-width: 2px; }
.web-only { display: flex; align-items: center; gap: 4px; margin-top: 8px; }
.web-only input { appearance: none; width: 12px; height: 12px; margin: 0; border: 1px solid #999; }
.pointer { position: absolute; right: -4px; bottom: 21px; width: 8px; height: 12px; }
```
